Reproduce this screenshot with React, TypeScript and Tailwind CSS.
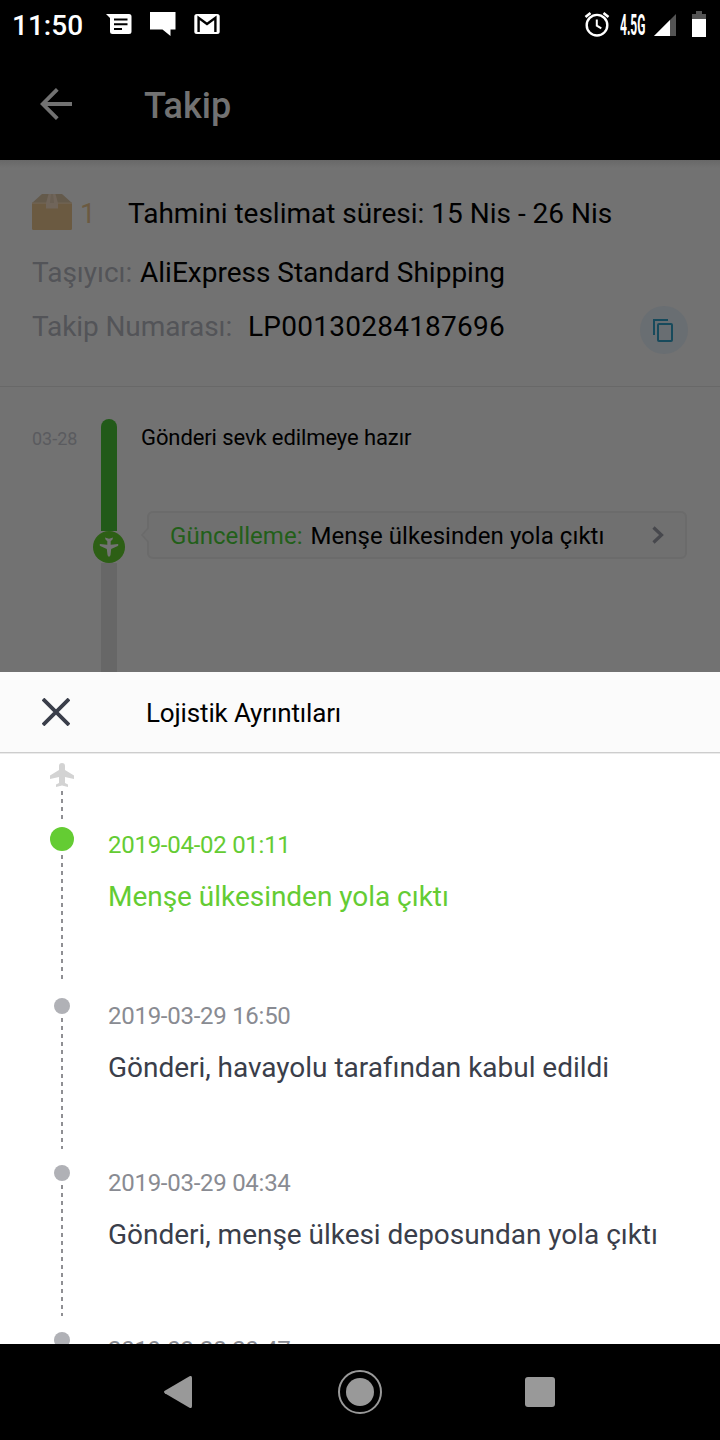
import React from "react";

interface TrackingEvent {
  date: string;
  text: string;
  active?: boolean;
}

const events: TrackingEvent[] = [
  { date: "2019-04-02 01:11", text: "Menşe ülkesinden yola çıktı", active: true },
  { date: "2019-03-29 16:50", text: "Gönderi, havayolu tarafından kabul edildi" },
  { date: "2019-03-29 04:34", text: "Gönderi, menşe ülkesi deposundan yola çıktı" },
  { date: "2019-03-28 20:47", text: "" },
];

const StatusBar = () => (
  <div className="flex h-12 shrink-0 items-center bg-black text-white">
    <span className="mt-[3px] ml-3 w-[94px] text-[28px] leading-8 font-medium">11:50</span>
    <svg className="h-[22px] w-[26px]" viewBox="0 0 26 22">
      <path d="M0 1h23a2.500 2.500 0 0 1 2.500 2.500v15a2.500 2.500 0 0 1-2.500 2.500H6.500A2.500 2.500 0 0 1 4 18.500V5z" fill="#fff" />
      <path d="M8 6.500h13.500M8 11.200h13.500M8 16h8" stroke="#000" strokeWidth="2" />
    </svg>
    <svg className="ml-[18px] h-[26px] w-[26px]" viewBox="0 0 26 26">
      <path d="M0 1h25.500v17.500h-5V25l-8-6.500H0z" fill="#fff" />
    </svg>
    <svg className="ml-[18px] h-[22px] w-[26px]" viewBox="0 0 26 22">
      <rect x=".3" y="1" width="25.400" height="20" rx="2.500" fill="#fff" />
      <path d="M4.600 19V4.800l8.400 6.200 8.400-6.200V19" fill="none" stroke="#000" strokeWidth="2.400" />
    </svg>
    <svg className="ml-auto h-[26px] w-[26px]" viewBox="0 0 26 26" fill="none" stroke="#fff">
      <circle cx="13" cy="14.200" r="10.300" strokeWidth="2.400" />
      <path d="M1.500 6l5-4M24.500 6l-5-4" strokeWidth="2.600" />
      <path d="M12.800 8.500v6.200l4.500 2.700" strokeWidth="2" />
    </svg>
    <div className="ml-[10px] w-[26px]">
      <span className="mt-[3px] inline-block origin-left scale-x-[0.4] text-[30px] leading-8 font-bold">4.5G</span>
    </div>
    <svg className="mt-0.5 ml-2 h-[22px] w-[22px]" viewBox="0 0 22 22">
      <path d="M0 22L22 0v22z" fill="#545454" />
      <path d="M0 22L16 6v16z" fill="#fff" />
    </svg>
    <svg className="mr-[14px] ml-4 h-[26px] w-[14px]" viewBox="0 0 14 26">
      <path d="M0 3h4V0h6v3h4v5H0z" fill="#545454" />
      <path d="M0 8h14v18H0z" fill="#fff" />
    </svg>
  </div>
);

const AppBar = () => (
  <div className="flex h-28 shrink-0 items-center bg-black text-[#727272]">
    <svg className="ml-10 h-8 w-8" viewBox="0 0 32 32" fill="none" stroke="currentColor" strokeWidth="3.800">
      <path d="M32 16H3M17.300 1.300L2.700 16l14.600 14.700" />
    </svg>
    <h1 className="mt-1 ml-[72px] text-[36px] leading-10 font-medium">Takip</h1>
  </div>
);

const ParcelInfo = () => (
  <div className="h-[227px] shrink-0 border-b border-[#686868] px-8 pt-[33px] text-[28px] leading-8">
    <div className="flex h-[37px] items-start">
      <svg className="h-[37px] w-10" viewBox="0 0 40 37">
        <path d="M10 1h20l10 9H0z" fill="#645a4b" />
        <path d="M0 10h40v25.500a1.500 1.500 0 0 1-1.500 1.500h-37A1.500 1.500 0 0 1 0 35.500z" fill="#6b5a41" />
        <path d="M0 9.500h40v1.200H0z" fill="#716454" />
        <path d="M16.500 1h7l2.500 9v5.500H14V10z" fill="#70655a" />
        <path d="M19 1h2l1 9h-4z" fill="#695f53" />
      </svg>
      <span className="mt-[5px] ml-2 w-12 text-[#6b5a41]">1</span>
      <span className="mt-[5px] text-black">Tahmini teslimat süresi: 15 Nis - 26 Nis</span>
    </div>
    <div className="mt-[27px] flex">
      <span className="w-[108px] text-[#535458]">Taşıyıcı:</span>
      <span className="text-black">AliExpress Standard Shipping</span>
    </div>
    <div className="mt-[17px] flex h-12 items-start">
      <span className="mt-[5px] w-[216px] tracking-[-0.1px] text-[#535458]">Takip Numarası:</span>
      <span className="mt-[5px] tracking-[0.25px] text-black">LP00130284187696</span>
      <div className="ml-auto flex size-12 items-center justify-center rounded-full bg-[#696e72]">
        <svg className="mr-0.5 h-6 w-5" viewBox="0 0 20 24" fill="none" stroke="#174a5c" strokeWidth="2">
          <path d="M1 17V2h14" />
          <rect x="5" y="6" width="14" height="17" rx="1" />
        </svg>
      </div>
    </div>
  </div>
);

const Progress = () => (
  <div className="flex min-h-0 flex-1 pt-8">
    <span className="mt-2 w-[93px] pl-8 text-[18px] leading-6 whitespace-nowrap text-[#5a5b5f]">03-28</span>
    <div className="flex w-8 flex-col items-center">
      <div className="h-28 w-4 shrink-0 rounded-t-full bg-[#225a19]" />
      <div className="-mt-0.5 h-0.5 w-4 shrink-0 bg-[#225a19]" />
      <div className="flex size-8 shrink-0 items-center justify-center rounded-full bg-[#2d5f15]">
        <svg className="size-5" viewBox="0 0 20 20" fill="#737373">
          <path d="M6 .5l4 1.200L14 .5l-.5 2-1.800 1.700v3.600l7.300-.9q1 1.200-.2 2l-6.600 3.200-.7 6q-.5 1.600-1.500 1.600t-1.500-1.600l-.7-6-6.600-3.200q-1.200-.8-.2-2l7.300.9V4.200L6.500 2.500z" />
        </svg>
      </div>
      <div className="w-4 flex-1 bg-[#676767]" />
    </div>
    <div className="ml-4 flex-1 pr-[33px]">
      <p className="mt-[7px] text-[22px] leading-6 tracking-[-0.1px] text-black">Gönderi sevk edilmeye hazır</p>
      <div className="mt-[61px] flex items-center">
        <svg className="z-10 -mr-0.5 h-4 w-2 shrink-0" viewBox="0 0 8 16">
          <path d="M8 0L1 8l7 8" fill="#707070" stroke="#6b6b6b" strokeWidth="1.500" />
        </svg>
        <div className="flex h-12 flex-1 items-center rounded-md border-2 border-[#6b6b6b] bg-[#707070] pl-[21px] text-[24px] leading-7">
          <span className="mt-0.5 tracking-[0.04px] text-[#225f19]">Güncelleme:</span>
          <span className="mt-0.5 ml-2 tracking-[0.04px] text-black">Menşe ülkesinden yola çıktı</span>
          <svg className="mr-[21px] ml-auto h-[18px] w-3" viewBox="0 0 12 18" fill="none" stroke="#47484d" strokeWidth="3.200">
            <path d="M1.500 1.500L9.500 9l-8 7.500" />
          </svg>
        </div>
      </div>
    </div>
  </div>
);

const DashedLine = ({ className }: { className: string }) => (
  <div
    className={`w-0.5 shrink-0 bg-[repeating-linear-gradient(to_bottom,#8f8f93_0px,#8f8f93_4px,transparent_4px,transparent_8px)] ${className}`}
  />
);

const EventRow = ({ date, text, active }: TrackingEvent) => (
  <div className={active ? "flex h-[171px] shrink-0" : "flex h-[167px] shrink-0"}>
    <div className="ml-[50px] flex w-6 flex-col items-center">
      {active ? (
        <div className="size-6 shrink-0 rounded-full bg-[#64cc33]" />
      ) : (
        <div className="size-4 shrink-0 rounded-full bg-[#b0b1b6]" />
      )}
      <DashedLine className={active ? "mt-1 h-[127px]" : "mt-1 h-[131px]"} />
    </div>
    <div className={active ? "ml-[34px] pt-[3px] text-[#64cc33]" : "ml-[34px] pt-[3px] text-[#3a3e4a]"}>
      <p
        className={
          active
            ? "text-[24px] leading-[30px] tracking-[-0.27px]"
            : "text-[24px] leading-[30px] tracking-[-0.27px] text-[#898b92]"
        }
      >
        {date}
      </p>
      <p className="mt-[21px] text-[28px] leading-8 tracking-[-0.03px] whitespace-nowrap">{text}</p>
    </div>
  </div>
);

const DetailsSheet = () => (
  <div className="flex h-[672px] shrink-0 flex-col overflow-hidden bg-white">
    <div className="flex h-[81px] shrink-0 items-center border-b border-[#cdcdcd] bg-[#fbfbfb]">
      <svg className="ml-[42px] size-7" viewBox="0 0 28 28" fill="none" stroke="#3a3e4a" strokeWidth="3.800">
        <path d="M1 1l26 26M27 1L1 27" />
      </svg>
      <h2 className="mt-0.5 ml-[76px] text-[26px] leading-8 tracking-[-0.15px] text-black">Lojistik Ayrıntıları</h2>
    </div>
    <div className="h-px shrink-0 bg-[#ebebeb]" />
    <div className="ml-[50px] flex h-[73px] w-6 shrink-0 flex-col items-center pt-[9px]">
      <svg className="size-6 shrink-0" viewBox="0 0 24 24" fill="#d3d3d3">
        <path d="M12 0q3 0 3 3v4l9 5.500V16l-9-2v6l3 1.500V24l-6-1.500L6 24v-2.500L9 20v-6l-9 2v-3.500L9 7V3q0-3 3-3z" />
      </svg>
      <DashedLine className="mt-1 h-8" />
    </div>
    {events.map((event) => (
      <EventRow key={event.date} {...event} />
    ))}
  </div>
);

const NavigationBar = () => (
  <div className="flex h-24 shrink-0 items-center bg-black">
    <svg className="ml-[164px] h-8 w-7" viewBox="0 0 28 32" fill="#999">
      <path d="M.8 14.800L25.500.3Q28-.8 28 2v28q0 2.800-2.500 1.700L.8 17.200Q-.8 16 .8 14.800z" />
    </svg>
    <div className="ml-[146px] flex size-11 items-center justify-center rounded-full border-2 border-[#999]">
      <div className="size-7 rounded-full bg-[#999]" />
    </div>
    <div className="ml-[143px] size-[30px] rounded-[3px] bg-[#999]" />
  </div>
);

export default function App() {
  return (
    <div className="flex h-[1440px] w-[720px] flex-col overflow-hidden bg-black font-['Roboto',sans-serif]">
      <StatusBar />
      <AppBar />
      <div className="flex h-[512px] shrink-0 flex-col overflow-hidden bg-[#727272] bg-[linear-gradient(to_bottom,#686868,#727272_8px)]">
        <ParcelInfo />
        <Progress />
      </div>
      <DetailsSheet />
      <NavigationBar />
    </div>
  );
}
